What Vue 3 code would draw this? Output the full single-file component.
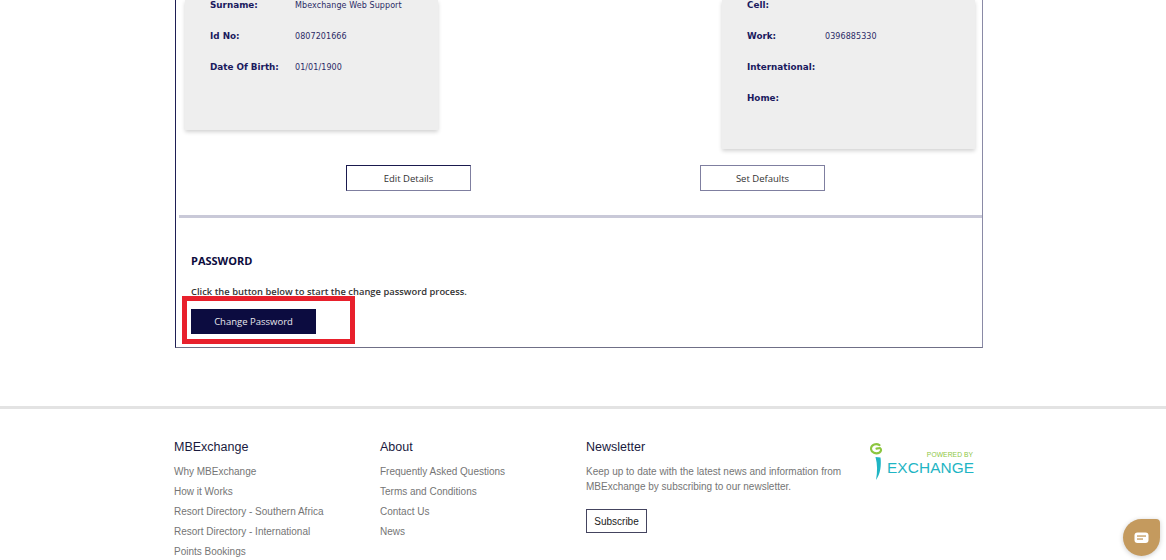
<script setup>
const leftRows = [
  { label: 'Surname:', value: 'Mbexchange Web Support' },
  { label: 'Id No:', value: '0807201666' },
  { label: 'Date Of Birth:', value: '01/01/1900' },
]
const rightRows = [
  { label: 'Cell:', value: '' },
  { label: 'Work:', value: '0396885330' },
  { label: 'International:', value: '' },
  { label: 'Home:', value: '' },
]
const columns = [
  { title: 'MBExchange', links: ['Why MBExchange', 'How it Works', 'Resort Directory - Southern Africa', 'Resort Directory - International', 'Points Bookings'] },
  { title: 'About', links: ['Frequently Asked Questions', 'Terms and Conditions', 'Contact Us', 'News'] },
]
</script>

<template>
  <div class="page">
    <section class="panel">
      <div class="cards">
        <div class="card card-left">
          <div v-for="r in leftRows" :key="r.label" class="row">
            <span class="label">{{ r.label }}</span><span class="value">{{ r.value }}</span>
          </div>
        </div>
        <div class="card card-right">
          <div v-for="r in rightRows" :key="r.label" class="row">
            <span class="label">{{ r.label }}</span><span class="value">{{ r.value }}</span>
          </div>
        </div>
      </div>
      <div class="actions">
        <button class="outline edit">Edit Details</button>
        <button class="outline">Set Defaults</button>
      </div>
      <div class="divider"></div>
      <div class="password">
        <h2>PASSWORD</h2>
        <p>Click the button below to start the change password process.</p>
        <button class="solid">Change Password</button>
        <div class="highlight"></div>
      </div>
    </section>

    <footer class="footer">
      <div class="footer-inner">
        <div v-for="c in columns" :key="c.title" class="col">
          <h3>{{ c.title }}</h3>
          <a v-for="l in c.links" :key="l">{{ l }}</a>
        </div>
        <div class="col news">
          <h3>Newsletter</h3>
          <p>Keep up to date with the latest news and information from MBExchange by subscribing to our newsletter.</p>
          <button class="subscribe">Subscribe</button>
        </div>
        <div class="logo">
          <svg width="14" height="38" viewBox="0 0 14 38" class="logo-mark">
            <path d="M9.5 2.2 C6.5 0 1.2 1.2 1 5.5 C0.9 9.5 6 11.5 9.5 9.5 C11.5 8.2 11.5 6 10 5 L6.5 5.6" fill="none" stroke="#8cc63f" stroke-width="2.1" stroke-linecap="round"/>
            <path d="M5.5 14 L10.5 14.5 C11.5 22 10.5 31 6 37 C7.5 29 7.5 21 5.5 14 Z" fill="#1fb5c4"/>
          </svg>
          <div class="logo-text">
            <span class="powered">POWERED BY</span>
            <span class="exchange">EXCHANGE</span>
          </div>
        </div>
      </div>
    </footer>

    <div class="chat">
      <svg width="15" height="12" viewBox="0 0 15 12">
        <rect x="0.5" y="0.5" width="14" height="10.5" rx="3" fill="#fff"/>
        <rect x="3" y="3.4" width="9" height="1.3" fill="#c49a5e"/>
        <rect x="3" y="6.4" width="6" height="1.3" fill="#c49a5e"/>
      </svg>
    </div>
  </div>
</template>

<style>
html, body { margin: 0; background: #fff; overflow: hidden; }
</style>

<style scoped>
.page {
  width: 1166px;
  height: 560px;
  overflow: hidden;
  position: relative;
  background: #fff;
  font-family: "Liberation Sans", Arial, sans-serif;
}
.panel {
  box-sizing: border-box;
  width: 808px;
  height: 348px;
  margin-left: 175px;
  border: 1px solid #1f1f55;
  border-top: 0;
  border-right-color: #8a8aa6;
  border-bottom-color: #6f6f86;
}
.cards {
  display: flex;
  justify-content: space-between;
  align-items: flex-start;
  padding: 0 7px 0 9px;
}
.card {
  width: 253px;
  box-sizing: border-box;
  background: #eeeeee;
  box-shadow: 0 2px 4px rgba(0, 0, 0, .18);
  padding: 0 0 0 25px;
}
.card-left { height: 130px; }
.card-right { height: 149px; }
.row {
  height: 31px;
  display: flex;
  align-items: center;
  margin-top: -11px;
  margin-bottom: 11px;
  font-family: "DejaVu Sans", Verdana, sans-serif;
  font-size: 8.8px;
  color: #1a1a5e;
}
.label { width: 85px; font-weight: 700; flex: none; }
.card-right .label { width: 78px; }
.value { color: #2b2b66; font-size: 8px; letter-spacing: .08px; padding-top: 1px; }
.actions {
  display: flex;
  gap: 229px;
  padding-left: 170px;
  margin-top: 16px;
}
.outline {
  width: 125px;
  height: 26px;
  box-sizing: border-box;
  padding: 0;
  background: #fff;
  border: 1px solid #7f7fa0;
  color: #333;
  font-family: "Open Sans", sans-serif;
  font-size: 9.5px;
}
.outline.edit {
  border-left-color: #1a1a4e;
  border-top-color: #1a1a4e;
}
.divider {
  height: 3px;
  margin: 24px 0 0 3px;
  background: #c9c9d8;
}
.password {
  position: relative;
  padding: 35px 0 0 15px;
  font-family: "Open Sans", sans-serif;
}
.password h2 {
  margin: 0;
  height: 16px;
  line-height: 16px;
  font-size: 11px;
  font-weight: 700;
  color: #0c0c3d;
}
.password p {
  margin: 16px 0 0;
  height: 14px;
  line-height: 14px;
  font-size: 9.4px;
  font-weight: 600;
  color: #333;
}
.solid {
  display: block;
  margin-top: 10px;
  width: 125px;
  height: 25px;
  padding: 0;
  border: 0;
  background: #0c0c40;
  color: #e8e8ee;
  font-family: "Open Sans", sans-serif;
  font-size: 9.5px;
}
.highlight {
  position: absolute;
  left: 6px;
  top: 78px;
  width: 173px;
  height: 48px;
  box-sizing: border-box;
  border: 5px solid #e8202c;
}
.footer {
  margin-top: 58px;
  border-top: 3px solid #e3e3e3;
  height: 154px;
}
.footer-inner {
  display: flex;
  padding: 31px 0 0 174px;
}
.col { width: 206px; flex: none; display: flex; flex-direction: column; }
.col h3 {
  margin: 0 0 7px;
  height: 15px;
  line-height: 15px;
  font-size: 12.5px;
  font-weight: 400;
  color: #1a1a3e;
}
.col a {
  height: 20px;
  line-height: 20px;
  font-size: 10px;
  color: #757575;
  white-space: nowrap;
}
.news { width: 284px; }
.news p {
  margin: 2px 0 0;
  width: 265px;
  font-size: 10px;
  line-height: 15px;
  color: #757575;
}
.subscribe {
  align-self: flex-start;
  margin-top: 15px;
  width: 61px;
  height: 24px;
  padding: 0;
  background: #fff;
  border: 1px solid #44445f;
  color: #222;
  font-family: "Liberation Sans", sans-serif;
  font-size: 10px;
}
.logo { display: flex; align-items: flex-start; margin-top: 3px; width: 110px; }
.logo-mark { flex: none; display: block; }
.logo-text { display: flex; flex-direction: column; align-items: flex-end; margin-left: 3px; padding-top: 8px; }
.powered {
  font-size: 6.7px;
  line-height: 8px;
  color: #8cc63f;
  letter-spacing: .1px;
  margin-right: 1px;
}
.exchange {
  font-family: "Liberation Sans", sans-serif;
  font-size: 15.4px;
  line-height: 12px;
  margin-top: 3px;
  color: #1fb5c4;
  letter-spacing: .1px;
}
.chat {
  position: absolute;
  left: 1123px;
  top: 519px;
  width: 37px;
  height: 37px;
  background: #c49a5e;
  border-radius: 50% 4px 50% 50%;
  box-shadow: 0 1px 5px rgba(0, 0, 0, .2);
  display: flex;
  align-items: center;
  justify-content: center;
}
</style>
